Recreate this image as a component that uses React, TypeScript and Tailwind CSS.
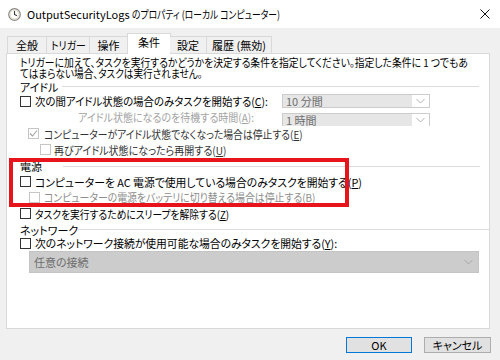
import React from "react";

const FONT = "[font-family:'Noto_Sans_CJK_JP','Noto_Sans',sans-serif] [font-feature-settings:'palt']";

function Box({ disabled = false, checked = false }: { disabled?: boolean; checked?: boolean }) {
  return (
    <div
      className={`w-[11px] h-[11px] shrink-0 bg-white border ${disabled ? "border-[#c6c6c6]" : "border-[#333333]"} flex items-center justify-center`}
    >
      {checked && (
        <svg width="9" height="9" viewBox="0 0 9 9">
          <path d="M1 4.5 L3.5 7 L8 1.5" fill="none" stroke="#a0a0a0" strokeWidth="1.1" />
        </svg>
      )}
    </div>
  );
}

function Chevron({ color = "#b0b0b0" }: { color?: string }) {
  return (
    <svg width="9" height="6" viewBox="0 0 9 6">
      <path d="M0.5 1 L4.5 5 L8.5 1" fill="none" stroke={color} strokeWidth="1" />
    </svg>
  );
}

function Group({ label, w }: { label: string; w: string }) {
  return (
    <div className="flex items-center h-full">
      <div className={`${w} shrink-0 leading-[12px] whitespace-nowrap`}>{label}</div>
      <div className="w-[417px] h-px bg-[#dcdcdc]" />
    </div>
  );
}

export default function App() {
  return (
    <div className={`w-[500px] h-[360px] bg-[#f0f0f0] overflow-hidden text-[11px] text-black ${FONT}`}>
      {/* title bar */}
      <div className="h-[28px] bg-white flex items-center">
        <div className="ml-[8px] w-[13px] h-[13px] flex items-center justify-center">
          <svg width="13" height="13" viewBox="0 0 13 13">
            <circle cx="6.5" cy="6.5" r="5.8" fill="#f3efe2" stroke="#8a8a8a" strokeWidth="1.2" />
            <circle cx="6.5" cy="6.5" r="4.3" fill="#ffffff" stroke="#d8d0b8" strokeWidth="0.6" />
            <path d="M6.5 3 L6.5 6.5 L9 7.8" fill="none" stroke="#3a3a3a" strokeWidth="1.1" />
          </svg>
        </div>
        <div className="ml-[6px] text-[11px] leading-[14px] whitespace-nowrap flex items-center">
          <span>OutputSecurityLogs</span>
          <span className="inline-block origin-left scale-x-[0.8]">&nbsp;のプロパティ (ローカル コンピューター)</span>
        </div>
        <div className="ml-auto mr-[10px] w-[10px] h-[10px]">
          <svg width="10" height="10" viewBox="0 0 10 10">
            <path d="M0.5 0.5 L9.5 9.5 M9.5 0.5 L0.5 9.5" stroke="#111" strokeWidth="1" />
          </svg>
        </div>
      </div>

      {/* tabs */}
      <div className="h-[25px] flex items-end pl-[7px] relative z-10">
        <div className="w-[40px] h-[17px] border border-b-0 border-[#d9d9d9] bg-[#f0f0f0] flex items-center justify-center leading-[12px]">全般</div>
        <div className="w-[43px] h-[17px] border border-b-0 border-l-0 border-[#d9d9d9] bg-[#f0f0f0] flex items-center justify-center leading-[12px]">
          <span className="inline-block scale-x-[0.9]">トリガー</span>
        </div>
        <div className="w-[38px] h-[17px] border border-b-0 border-l-0 border-[#d9d9d9] bg-[#f0f0f0] flex items-center justify-center leading-[12px]">操作</div>
        <div className="w-[44px] h-[21px] -mx-[1px] mb-[-1px] border border-b-0 border-[#d9d9d9] bg-white flex items-start justify-center pt-[2px] leading-[12px]">条件</div>
        <div className="w-[37px] h-[17px] border border-b-0 border-l-0 border-[#d9d9d9] bg-[#f0f0f0] flex items-center justify-center leading-[12px]">設定</div>
        <div className="w-[65px] h-[17px] border border-b-0 border-l-0 border-[#d9d9d9] bg-[#f0f0f0] flex items-center justify-center leading-[12px]">履歴 (無効)</div>
      </div>

      {/* panel */}
      <div className="ml-[6px] w-[484px] h-[276px] bg-white border border-[#d9d9d9] relative flex flex-col pl-[13px]">
        <div className="pt-[3px] leading-[11px] whitespace-nowrap">
          <div className="h-[11px]">
            <span className="inline-block origin-left scale-x-[0.89]">トリガーに加えて、タスクを実行するかどうかを決定する条件を指定してください。指定した条件に 1 つでもあ</span>
          </div>
          <div className="h-[11px]">
            <span className="inline-block origin-left scale-x-[0.875]">てはまらない場合、タスクは実行されません。</span>
          </div>
        </div>

        <div className="h-[15px]">
          <Group label="アイドル" w="w-[42px]" />
        </div>

        <div className="h-[14px] flex items-center">
          <div className="w-[262px] flex items-center">
            <Box />
            <span className="ml-[4px] leading-[12px] whitespace-nowrap inline-block origin-left scale-x-[0.947]">次の間アイドル状態の場合のみタスクを開始する(<u>C</u>):</span>
          </div>
          <div className="w-[148px] h-[14px] border border-[#cccccc] flex bg-white">
            <div className="w-[129px] h-full bg-[#e6e6e6] flex items-center pl-[3px] text-[#6d6d6d] leading-[12px] whitespace-nowrap">10 分間</div>
            <div className="flex-1 flex items-center justify-center"><Chevron /></div>
          </div>
        </div>

        <div className="h-[18px] flex items-start">
          <div className="w-[262px] h-full flex items-center pl-[58px]">
            <span className="leading-[12px] whitespace-nowrap text-[#a3a3a3] inline-block origin-left scale-x-[0.91]">アイドル状態になるのを待機する時間(<u>A</u>):</span>
          </div>
          <div className="mt-[5px] w-[148px] h-[13px] border border-b-0 border-[#cccccc] flex bg-white">
            <div className="w-[129px] h-full bg-[#e6e6e6] flex items-center pl-[3px] text-[#6d6d6d] leading-[12px] whitespace-nowrap">1 時間</div>
            <div className="flex-1 flex items-center justify-center"><Chevron /></div>
          </div>
        </div>

        <div className="h-[15px] flex items-center pl-[8px] relative">
          <Box disabled checked />
          <span className="ml-[5px] leading-[12px] whitespace-nowrap text-[#333333] bg-white pr-[2px] inline-block origin-left scale-x-[0.893]">コンピューターがアイドル状態でなくなった場合は停止する(<u>E</u>)</span>
        </div>

        <div className="h-[17px] flex items-center pl-[20px]">
          <Box disabled />
          <span className="ml-[3px] leading-[12px] whitespace-nowrap text-[#333333] inline-block origin-left scale-x-[0.91]">再びアイドル状態になったら再開する(<u>U</u>)</span>
        </div>

        <div className="h-[16px]">
          <Group label="電源" w="w-[43px]" />
        </div>

        <div className="h-[15px] flex items-center">
          <Box />
          <span className="ml-[4px] leading-[12px] whitespace-nowrap inline-block origin-left scale-x-[0.984]">コンピューターを AC 電源で使用している場合のみタスクを開始する(<u>P</u>)</span>
        </div>

        <div className="h-[16px] flex items-center pl-[9px]">
          <Box disabled />
          <span className="ml-[4px] leading-[12px] whitespace-nowrap text-[#8d8d8d] inline-block origin-left scale-x-[0.897]">コンピューターの電源をバッテリに切り替える場合は停止する(<u>B</u>)</span>
        </div>

        <div className="h-[17px] flex items-center">
          <Box />
          <span className="ml-[4px] leading-[12px] whitespace-nowrap inline-block origin-left scale-x-[0.888]">タスクを実行するためにスリープを解除する(<u>Z</u>)</span>
        </div>

        <div className="h-[15px]">
          <Group label="ネットワーク" w="w-[57px]" />
        </div>

        <div className="h-[12px] flex items-center">
          <Box />
          <span className="ml-[4px] leading-[12px] whitespace-nowrap inline-block origin-left scale-x-[0.98]">次のネットワーク接続が使用可能な場合のみタスクを開始する(<u>Y</u>):</span>
        </div>

        <div className="mt-[2px] ml-[9px] w-[450px] h-[22px] bg-[#cccccc] border border-[#c4c4c4] flex items-center justify-between pl-[4px] pr-[5px]">
          <span className="text-[#6d6d6d] leading-[12px] whitespace-nowrap">任意の接続</span>
          <Chevron color="#a8a8a8" />
        </div>

        {/* red highlight */}
        <div className="absolute left-[2px] top-[104px] w-[340px] h-[49px] border-4 border-[#e8141b] pointer-events-none" />
      </div>

      {/* buttons */}
      <div className="flex justify-end gap-[12px] pr-[9px] mt-[8px]">
        <div className="w-[66px] h-[16px] bg-[#e1e1e1] border-[1.5px] border-[#0078d7] flex items-center justify-center leading-[12px]">OK</div>
        <div className="w-[67px] h-[16px] bg-[#e1e1e1] border border-[#adadad] flex items-center justify-center leading-[12px]">キャンセル</div>
      </div>
    </div>
  );
}
